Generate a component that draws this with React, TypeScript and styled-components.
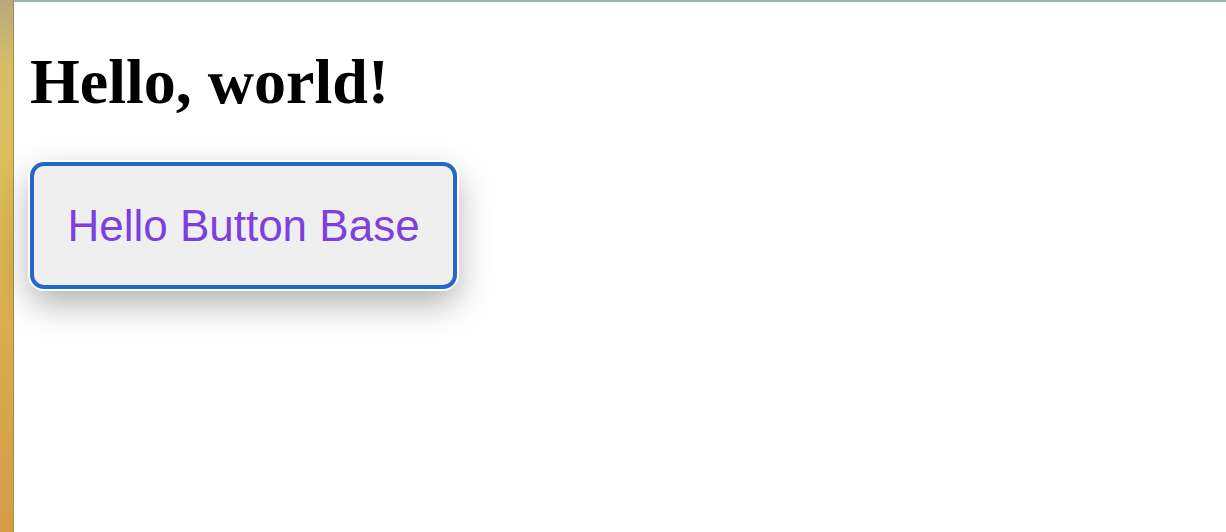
import React from "react";
import styled, { createGlobalStyle } from "styled-components";

const GlobalStyle = createGlobalStyle`
  html, body {
    margin: 0;
    padding: 0;
    height: 100%;
    background: #ffffff;
  }
  #root {
    height: 100%;
  }
`;

const Desktop = styled.div`
  display: flex;
  width: 1226px;
  height: 532px;
  overflow: hidden;
`;

const Wallpaper = styled.div`
  flex: 0 0 13px;
  background: linear-gradient(
    180deg,
    #b8a87e 0%,
    #d7bd66 12%,
    #ddbe5e 30%,
    #d9ad52 60%,
    #d59c47 100%
  );
  border-right: 1px solid #b48a3e;
`;

const Window = styled.main`
  flex: 1;
  display: flex;
  flex-direction: column;
  align-items: flex-start;
  border-top: 2px solid #9db3b9;
  background: #ffffff;
  padding: 0 16px;
`;

const Heading = styled.h1`
  margin: 43px 0 43px;
  font-family: "Liberation Serif", "Times New Roman", serif;
  font-weight: 700;
  font-size: 64px;
  color: #000000;
`;

const ButtonBase = styled.button`
  box-sizing: border-box;
  display: inline-flex;
  align-items: center;
  justify-content: center;
  width: 427px;
  height: 127px;
  padding: 0 33px;
  background: #efeff0;
  border: 4px solid #2566c9;
  border-radius: 14px;
  box-shadow: 0 0 0 2px #ffffff, 0 14px 34px rgba(0, 0, 0, 0.32);
  font-family: "Liberation Sans", Arial, sans-serif;
  font-size: 44px;
  color: #7e3fdf;
  cursor: pointer;
`;

export default function App() {
  return (
    <>
      <GlobalStyle />
      <Desktop>
        <Wallpaper />
        <Window>
          <Heading>Hello, world!</Heading>
          <ButtonBase type="button">Hello Button Base</ButtonBase>
        </Window>
      </Desktop>
    </>
  );
}
